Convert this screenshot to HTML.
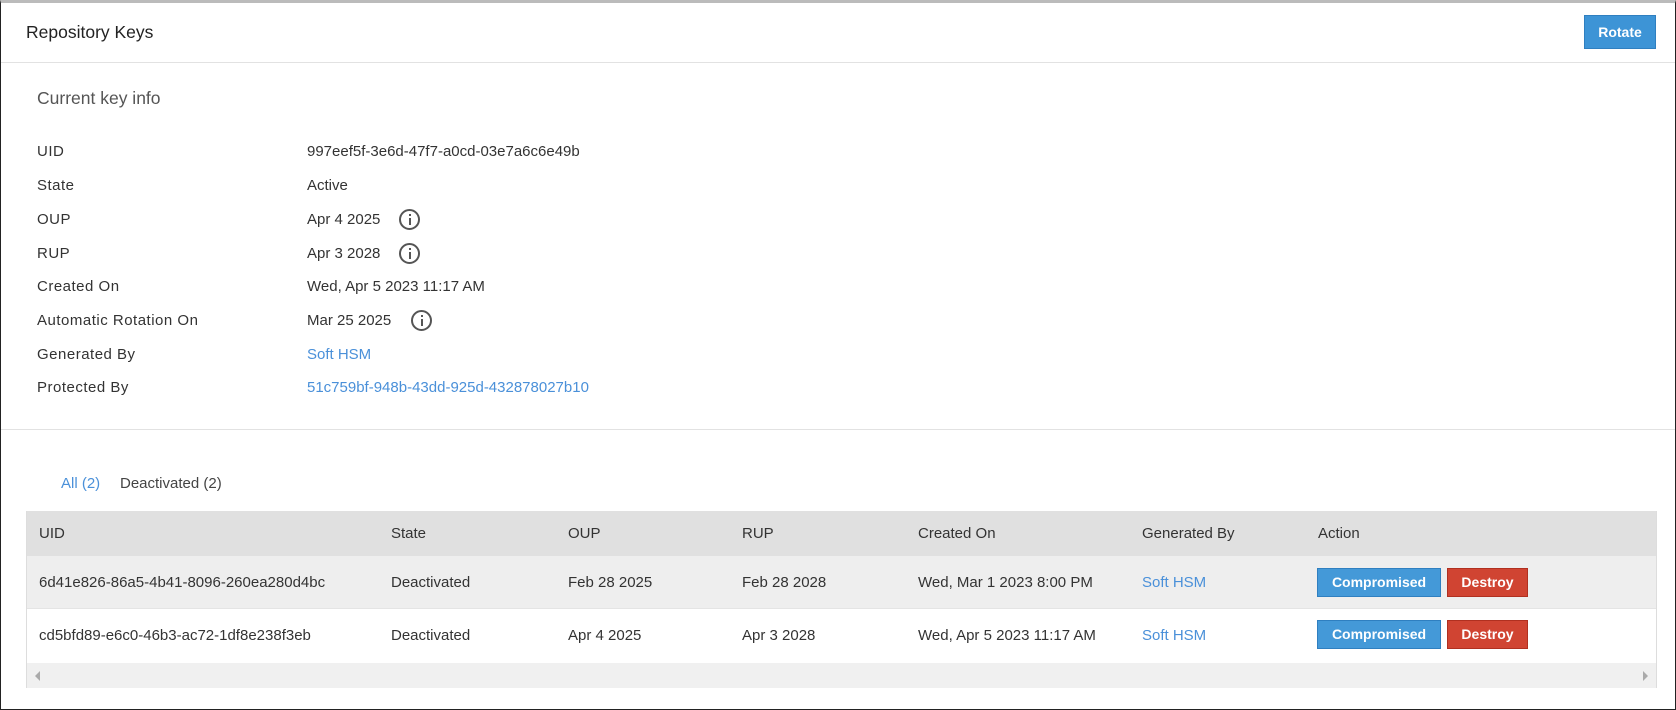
<!DOCTYPE html>
<html><head><meta charset="utf-8"><style>
*{box-sizing:border-box;margin:0;padding:0}
body{width:1676px;height:710px;background:#fff;font-family:"Liberation Sans",Arial,sans-serif;color:#333;position:relative;overflow:hidden}
.frame{position:absolute;left:0;top:0;width:1676px;height:710px;border:1px solid #222;border-top:3px solid #bbb}
.a{position:absolute;white-space:nowrap}
.hdr{left:26px;top:22px;font-size:17.5px;color:#222}
.rot{position:absolute;left:1584px;top:15px;width:72px;height:34px;background:#3d94d6;border:1px solid #2f7fc0;color:#fff;font-weight:bold;font-size:14px;text-align:center;line-height:32px}
.line{position:absolute;left:1px;right:1px;height:1px;background:#e2e2e2}
.sub{left:37px;top:88px;font-size:17.5px;color:#555}
.lb{left:37px;font-size:15px;color:#333;letter-spacing:0.5px}
.vl{left:307px;font-size:15px;color:#333}
.lnk{color:#4a90d9}
.ic{position:absolute;width:21px;height:21px;border:2px solid #555;border-radius:50%}
.ic:before{content:"";position:absolute;left:7.5px;top:3px;width:2px;height:2px;background:#555}
.ic:after{content:"";position:absolute;left:7.5px;top:7px;width:2px;height:7px;background:#555}
.tbl{position:absolute;left:26px;top:511px;width:1631px;height:177px;border:1px solid #ddd;border-top:none}
.th{position:absolute;left:0;top:0;width:100%;height:45px;background:#e0e0e0}
.r1{position:absolute;left:0;top:45px;width:100%;height:53px;background:#eee;border-bottom:1px solid #e4e4e4}
.r2{position:absolute;left:0;top:98px;width:100%;height:54px;background:#fff}
.sb{position:absolute;left:0;top:152px;width:100%;height:25px;background:#f0f0f0}
.c{position:absolute;font-size:15px;white-space:nowrap}
.btn{position:absolute;height:29px;color:#fff;font-weight:bold;font-size:14px;text-align:center;line-height:27px}
.bb{background:#4499d8;border:1px solid #2f7fc0;width:124px}
.br{background:#d04432;border:1px solid #b03020;width:81px}
</style></head><body>
<div class="frame"></div>
<div class="a hdr">Repository Keys</div>
<div class="rot">Rotate</div>
<div class="line" style="top:62px"></div>
<div class="a sub">Current key info</div>
<div class="a lb" style="top:143px">UID</div><div class="a vl" style="top:143px">997eef5f-3e6d-47f7-a0cd-03e7a6c6e49b</div>
<div class="a lb" style="top:177px">State</div><div class="a vl" style="top:177px">Active</div>
<div class="a lb" style="top:211px">OUP</div><div class="a vl" style="top:211px">Apr 4 2025</div><div class="ic" style="left:399px;top:209px"></div>
<div class="a lb" style="top:245px">RUP</div><div class="a vl" style="top:245px">Apr 3 2028</div><div class="ic" style="left:399px;top:243px"></div>
<div class="a lb" style="top:278px">Created On</div><div class="a vl" style="top:278px">Wed, Apr 5 2023 11:17 AM</div>
<div class="a lb" style="top:312px">Automatic Rotation On</div><div class="a vl" style="top:312px">Mar 25 2025</div><div class="ic" style="left:411px;top:310px"></div>
<div class="a lb" style="top:346px">Generated By</div><div class="a vl lnk" style="top:346px">Soft HSM</div>
<div class="a lb" style="top:379px">Protected By</div><div class="a vl lnk" style="top:379px">51c759bf-948b-43dd-925d-432878027b10</div>
<div class="line" style="top:429px"></div>
<div class="a lnk" style="left:61px;top:475px;font-size:15px">All (2)</div>
<div class="a" style="left:120px;top:475px;font-size:15px;color:#444">Deactivated (2)</div>
<div class="tbl">
<div class="th">
<div class="c" style="left:12px;top:14px">UID</div><div class="c" style="left:364px;top:14px">State</div><div class="c" style="left:541px;top:14px">OUP</div><div class="c" style="left:715px;top:14px">RUP</div><div class="c" style="left:891px;top:14px">Created On</div><div class="c" style="left:1115px;top:14px">Generated By</div><div class="c" style="left:1291px;top:14px">Action</div>
</div>
<div class="r1">
<div class="c" style="left:12px;top:18px">6d41e826-86a5-4b41-8096-260ea280d4bc</div><div class="c" style="left:364px;top:18px">Deactivated</div><div class="c" style="left:541px;top:18px">Feb 28 2025</div><div class="c" style="left:715px;top:18px">Feb 28 2028</div><div class="c" style="left:891px;top:18px">Wed, Mar 1 2023 8:00 PM</div><div class="c lnk" style="left:1115px;top:18px">Soft HSM</div>
<div class="btn bb" style="left:1290px;top:12px">Compromised</div><div class="btn br" style="left:1420px;top:12px">Destroy</div>
</div>
<div class="r2">
<div class="c" style="left:12px;top:18px">cd5bfd89-e6c0-46b3-ac72-1df8e238f3eb</div><div class="c" style="left:364px;top:18px">Deactivated</div><div class="c" style="left:541px;top:18px">Apr 4 2025</div><div class="c" style="left:715px;top:18px">Apr 3 2028</div><div class="c" style="left:891px;top:18px">Wed, Apr 5 2023 11:17 AM</div><div class="c lnk" style="left:1115px;top:18px">Soft HSM</div>
<div class="btn bb" style="left:1290px;top:11px">Compromised</div><div class="btn br" style="left:1420px;top:11px">Destroy</div>
</div>
<div class="sb">
<div style="position:absolute;left:8px;top:8px;width:0;height:0;border-top:5px solid transparent;border-bottom:5px solid transparent;border-right:5px solid #aaa"></div>
<div style="position:absolute;right:8px;top:8px;width:0;height:0;border-top:5px solid transparent;border-bottom:5px solid transparent;border-left:5px solid #aaa"></div>
</div>
</div>
</body></html>
